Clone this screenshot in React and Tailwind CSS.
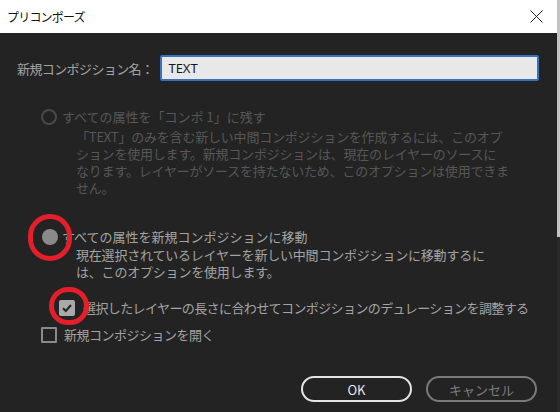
import React from 'react';

const jp = "font-['Noto_Sans_CJK_JP','Noto_Sans',sans-serif]";

function RedRing({ className }) {
  return (
    <span className={`pointer-events-none absolute rounded-full border-[5px] border-[#e41f2b] ${className}`} />
  );
}

function App() {
  return (
    <div className={`flex h-[412px] w-[560px] overflow-hidden ${jp}`}>
      <div className="flex w-[557px] flex-col">
        {/* title bar */}
        <div className="flex h-[33px] items-center justify-between bg-white pl-[7px] pr-[14px]">
          <span className="text-[12px] tracking-[-0.8px] text-[#111]">プリコンポーズ</span>
          <svg width="13" height="13" viewBox="0 0 13 13">
            <path d="M0.5 0.5 L12.5 12.5 M12.5 0.5 L0.5 12.5" stroke="#222" strokeWidth="1" fill="none" />
          </svg>
        </div>

        {/* body */}
        <div className="flex flex-1 flex-col bg-[#232323] pt-[22px] text-[13px] leading-[17px]">
          <div className="flex items-center pl-[17px]">
            <span className="tracking-[-0.6px] text-[#a3a3a3]">新規コンポジション名：</span>
            <div className="ml-[7px] flex h-[26px] w-[379px] items-center rounded-[2px] border-2 border-[#3672bd] bg-[#e8e8e8] pl-[6px]">
              <span className="font-['Noto_Sans',sans-serif] text-[13px] text-[#1c1420]">TEXT</span>
            </div>
          </div>

          {/* option 1, disabled */}
          <div className="mt-[27px] flex flex-col text-[#575757]">
            <div className="flex items-center pl-[41px]">
              <span className="h-[16px] w-[16px] rounded-full border-[2.5px] border-[#4a4a4a]" />
              <span className="ml-[5px]">すべての属性を「コンポ 1」に残す</span>
            </div>
            <p className="mt-[3px] whitespace-nowrap pl-[76px] tracking-[-0.2px]">
              「TEXT」のみを含む新しい中間コンポジションを作成するには、このオプ<br />
              ションを使用します。新規コンポジションは、現在のレイヤーのソースに<br />
              なります。レイヤーがソースを持たないため、このオプションは使用できま<br />
              せん。
            </p>
          </div>

          {/* option 2, selected */}
          <div className="mt-[32px] flex flex-col text-[#a3a3a3]">
            <div className="flex items-center pl-[42px]">
              <span className="relative h-[16px] w-[16px] rounded-full bg-[#8a8a8a]">
                <RedRing className="-left-[14px] -top-[15px] h-[47px] w-[44px]" />
              </span>
              <span className="ml-[4px]">すべての属性を新規コンポジションに移動</span>
            </div>
            <p className="mt-[1px] whitespace-nowrap pl-[76px] tracking-[-0.2px]">
              現在選択されているレイヤーを新しい中間コンポジションに移動するに<br />
              は、このオプションを使用します。
            </p>
          </div>

          <div className="mt-[19px] flex items-center pl-[59px] text-[#a3a3a3]">
            <span className="relative flex h-[16px] w-[16px] items-center justify-center rounded-[2px] bg-[#a9a9a9]">
              <svg width="12" height="12" viewBox="0 0 12 12">
                <path d="M2 6.3 L4.8 9 L10 3" stroke="#232323" strokeWidth="2" fill="none" />
              </svg>
              <RedRing className="-left-[10px] -top-[13px] h-[38px] w-[40px]" />
            </span>
            <span className="ml-[8px] tracking-[-0.6px]">選択したレイヤーの長さに合わせてコンポジションのデュレーションを調整する</span>
          </div>

          <div className="mt-[10px] flex items-center pl-[41px] text-[#a3a3a3]">
            <span className="h-[16px] w-[16px] rounded-[1px] border-2 border-[#8a8a8a]" />
            <span className="ml-[7px] tracking-[-0.5px]">新規コンポジションを開く</span>
          </div>

          <div className="mt-[33px] flex justify-end gap-[14px] pr-[20px]">
            <button className="h-[26px] w-[111px] rounded-full border-2 border-[#e4e4e4] text-[13px] text-[#e8e8e8]">
              OK
            </button>
            <button className="h-[26px] w-[111px] rounded-full border-2 border-[#7a7a7a] text-[13px] text-[#7d7d7d]">
              キャンセル
            </button>
          </div>
        </div>
      </div>

      {/* right edge strip */}
      <div className="flex w-[3px] flex-col">
        <div className="h-[237px] bg-[#c4c4c4]" />
        <div className="flex-1 bg-[#2a2a2a]" />
      </div>
    </div>
  );
}

export default App;
